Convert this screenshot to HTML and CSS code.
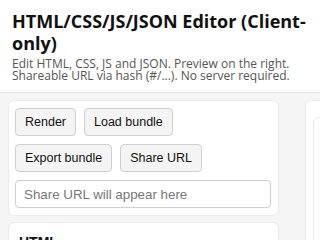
FILE: index.html
```html
<!DOCTYPE html>
<html lang="en">
<head>
    <meta charset="UTF-8">
    <meta name="viewport" content="width=device-width, initial-scale=1.0">
    <title>HTML/CSS/JS/JSON Editor</title>
    <link rel="stylesheet" href="styles.css">
</head>
<body>
    <header class="top">
        <h1>HTML/CSS/JS/JSON Editor (Client-only)</h1>
        <p class="sub">Edit HTML, CSS, JS and JSON. Preview on the right. Shareable URL via hash (#/...). No server required.</p>
    </header>

    <main class="layout">
        <div class="left">
            <div class="card">
                <div class="row">
                    <button class="btn">Render</button>
                    <button class="btn">Load bundle</button>
                </div>
                <div class="row">
                    <button class="btn">Export bundle</button>
                    <button class="btn">Share URL</button>
                </div>
                <input class="share" type="text" placeholder="Share URL will appear here">
            </div>
            <div class="card">
                <div class="label">HTML</div>
            </div>
        </div>
        <div class="right">
            <div class="card preview-card">
                <div class="preview"></div>
            </div>
        </div>
    </main>
</body>
</html>
```

FILE: styles.css
```css
body {
    margin: 0;
    background-color: #f5f5f6;
    font-family: "Open Sans", sans-serif;
    color: #111;
    overflow: hidden;
}
.top {
    background-color: #fff;
    padding: 10px 12px 10px;
    border-bottom: 1px solid #e4e4e4;
}
.top h1 {
    margin: 0;
    font-size: 18px;
    line-height: 22px;
    font-weight: 700;
}
.sub {
    margin: 4px 0 0;
    font-size: 12px;
    line-height: 12px;
    color: #555;
}
.layout {
    display: grid;
    grid-template-columns: 271px 271px;
    gap: 26px;
    padding: 7px 8px;
}
.left {
    display: flex;
    flex-direction: column;
    gap: 6px;
}
.card {
    background-color: #fff;
    border: 1px solid #ebebeb;
    border-radius: 6px;
    padding: 7px 6px;
    display: flex;
    flex-direction: column;
    gap: 8px;
}
.row {
    display: flex;
    gap: 8px;
}
.btn {
    font-family: "Liberation Sans", Arial, sans-serif;
    font-size: 12.5px;
    color: #111;
    background-color: #f4f4f4;
    border: 1px solid #cfcfcf;
    border-radius: 4px;
    height: 28px;
    padding: 0 9px;
}
.share {
    font-family: "Liberation Sans", Arial, sans-serif;
    font-size: 13.33px;
    height: 28px;
    box-sizing: border-box;
    border: 1px solid #cfcfcf;
    border-radius: 4px;
    padding: 0 8px;
    margin-right: 1px;
}
.share::placeholder {
    color: #777;
}
.label {
    font-family: "Liberation Sans", Arial, sans-serif;
    font-weight: 700;
    font-size: 14px;
    padding: 4px 4px;
}
.preview-card {
    height: 400px;
    padding: 16px 7px;
}
.preview {
    border: 1px solid #e8e8e8;
    border-radius: 6px;
    flex: 1;
}
```
